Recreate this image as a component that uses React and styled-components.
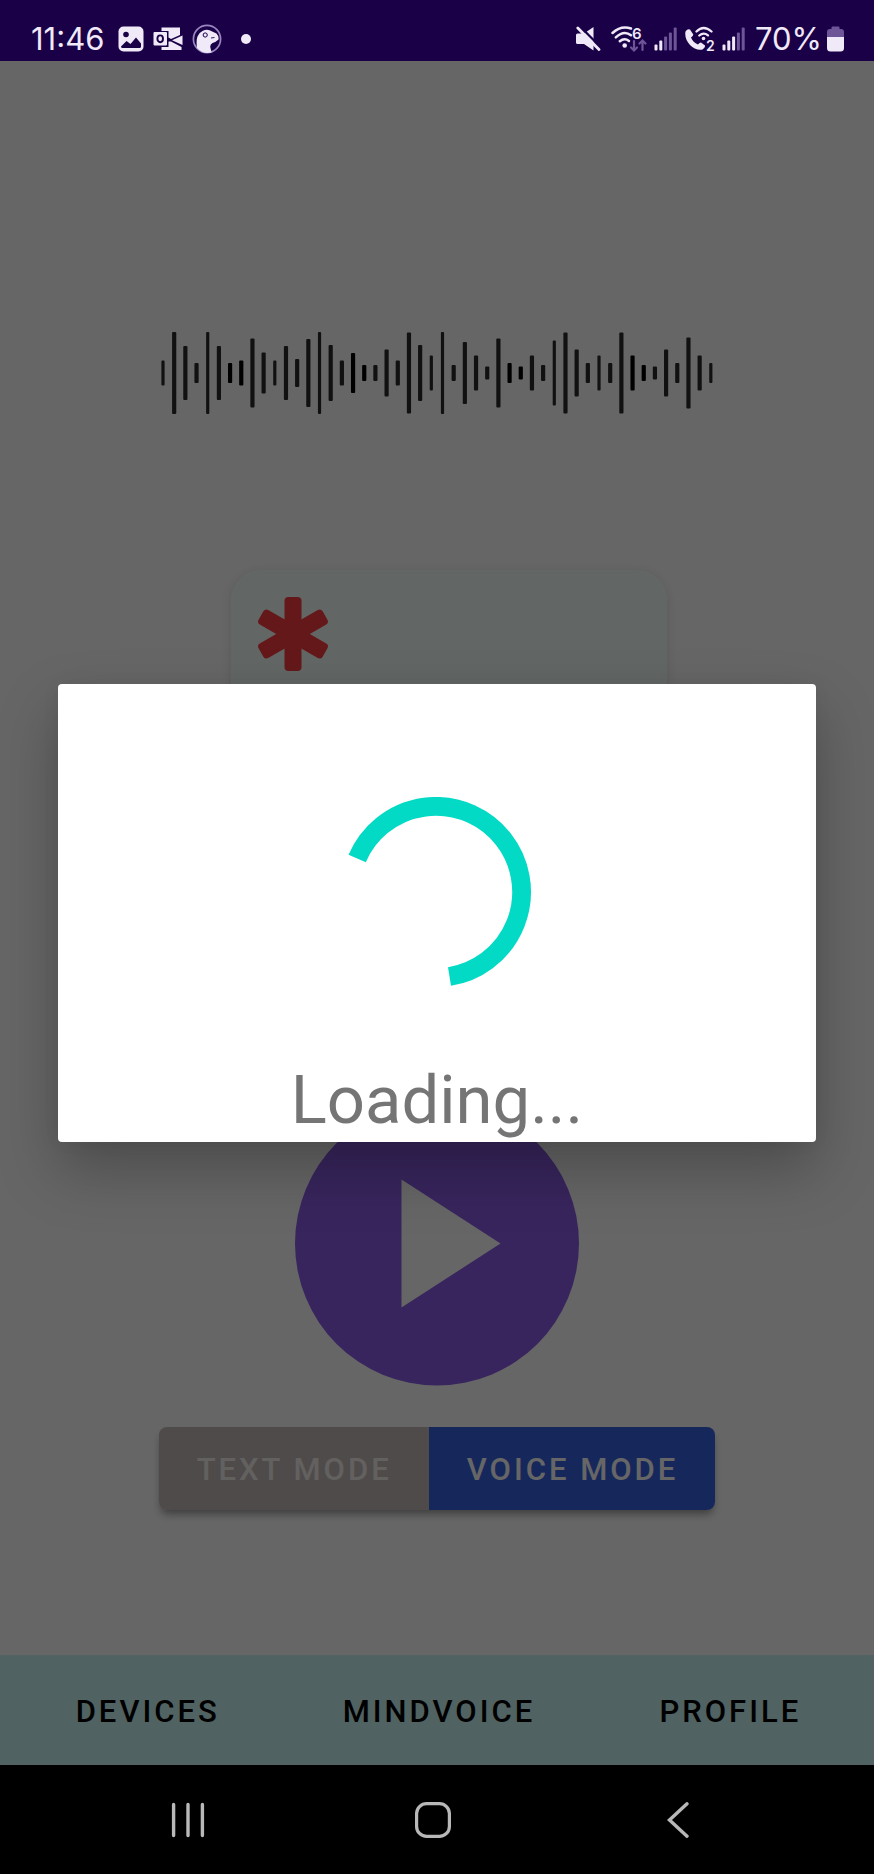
import React from "react";
import styled, { createGlobalStyle } from "styled-components";

const ICON = "#f0e9f8";
const ICON_DIM = "#6d5597";
const STATUS_BG = "#1a0047";

const GlobalStyle = createGlobalStyle`
  * { box-sizing: border-box; }
  body { margin: 0; background: #000; font-family: Roboto, "Liberation Sans", sans-serif; }
  button { font: inherit; border: 0; padding: 0; margin: 0; background: none; cursor: pointer; }
  svg { display: block; flex: none; }
`;

const Phone = styled.div`
  min-height: 100vh;
  display: flex;
  flex-direction: column;
`;

const StatusBar = styled.header`
  display: flex;
  justify-content: space-between;
  align-items: center;
  height: 61px;
  padding: 17px 30px 0 31px;
  background: ${STATUS_BG};
  color: ${ICON};
`;

const StatusGroup = styled.div`
  display: flex;
  align-items: center;
  gap: ${(p) => p.$gap}px;
`;

const StatusText = styled.span`
  font-family: Inter, Roboto, sans-serif;
  font-size: 31px;
  line-height: 36px;
  white-space: nowrap;
`;

const AppArea = styled.div`
  position: relative;
  flex: 1;
  display: flex;
  flex-direction: column;
  background: #fff;
`;

const Screen = styled.main`
  flex: 1;
  display: flex;
  flex-direction: column;
  align-items: center;
  padding: 270px 24px 144px;
`;

const WaveBox = styled.div`
  margin-bottom: 155px;
`;

const MessageCard = styled.section`
  width: 436px;
  max-width: 100%;
  height: 476px;
  margin: 0 0 55px 24px;
  padding: 26px 24px;
  border-radius: 30px;
  background: #f6fffc;
  box-shadow: 0 2px 12px rgba(0, 0, 0, 0.12);
`;

const PlayButton = styled.button`
  width: 284px;
  height: 285px;
  margin-bottom: 41px;
  border-radius: 50%;
`;

const ModeSwitch = styled.div`
  display: flex;
  border-radius: 8px;
  box-shadow: 0 6px 8px -2px rgba(0, 0, 0, 0.4);
`;

const ModeButton = styled.button`
  height: 83px;
  padding: 2px 37px 0 38px;
  font-size: 31px;
  font-weight: 500;
  letter-spacing: 3px;
  white-space: nowrap;
  color: ${(p) => (p.$active ? "#ffffff" : "#f4f2ef")};
  background: ${(p) => (p.$active ? "#3962e6" : "#c6bbb9")};
  border-radius: ${(p) => (p.$active ? "0 8px 8px 0" : "8px 0 0 8px")};
`;

const TabBar = styled.nav`
  display: grid;
  grid-template-columns: repeat(3, 1fr);
  height: 110px;
  background: #c8f5f3;
`;

const Tab = styled.button`
  padding: 2px 0 0 4px;
  font-size: 31px;
  font-weight: 500;
  letter-spacing: 3px;
  color: #000;
`;

const Scrim = styled.div`
  position: absolute;
  inset: 0;
  display: flex;
  align-items: center;
  padding: 0 58px;
  background: rgba(0, 0, 0, 0.6);
`;

const Dialog = styled.div`
  flex: 1;
  display: flex;
  flex-direction: column;
  align-items: center;
  gap: 73px;
  padding: 113px 24px 2px;
  border-radius: 4px;
  background: #fff;
  box-shadow: 0 28px 60px rgba(0, 0, 0, 0.26), 0 0 20px rgba(0, 0, 0, 0.04);
`;

const LoadingText = styled.p`
  margin: 0;
  font-size: 67px;
  line-height: 80px;
  color: #757575;
`;

const SystemNav = styled.nav`
  display: grid;
  grid-template-columns: repeat(3, 1fr);
  height: 109px;
  padding: 0 73px 0 65px;
  background: #000;
`;

const SystemButton = styled.button`
  display: flex;
  align-items: center;
  justify-content: center;
`;

const WAVE = [
  25, 82, 54, 20, 82, 54, 20, 25, 69, 41, 25, 54, 28, 68, 82, 56, 25, 40, 16, 16,
  47, 25, 81, 56, 35, 82, 16, 62, 35, 13, 69, 20, 13, 35, 16, 65, 81, 47, 20, 35,
  20, 81, 35, 16, 13, 47, 20, 71, 35, 20,
];
const THIN = [0, 4, 10, 14, 24, 25, 35, 39, 49];
const BOLD = [6, 7, 17, 18, 31, 32, 42, 43];

function Waveform() {
  return (
    <svg width="554" height="84" viewBox="0 0 554 84" role="img" aria-label="Sound wave">
      {WAVE.map((h, i) => {
        const w = THIN.includes(i) ? 3.2 : 4.2;
        return (
          <rect
            key={i}
            x={3 + i * 11.18 - w / 2}
            y={42 - h / 2}
            width={w}
            height={h}
            rx="1"
            fill={BOLD.includes(i) ? "#000" : "#2c2c2c"}
          />
        );
      })}
    </svg>
  );
}

function Asterisk() {
  return (
    <svg width="76" height="76" viewBox="-38 -38 76 76" fill="#f93d40" role="img" aria-label="Required">
      {[0, 60, 120].map((a) => (
        <rect key={a} x="-8.5" y="-37" width="17" height="74" rx="4" transform={`rotate(${a})`} />
      ))}
    </svg>
  );
}

function GalleryIcon() {
  return (
    <svg width="26" height="26" viewBox="0 0 26 26">
      <rect x="0.5" y="0.5" width="25" height="25" rx="5" fill={ICON} />
      <circle cx="8" cy="8.5" r="2.8" fill={STATUS_BG} />
      <path d="M3 20.5 8.500 15 12.500 18 18 11.500 23 17.500V20.500Q23 22 21.500 22H4.500Q3 22 3 20.500Z" fill={STATUS_BG} />
    </svg>
  );
}

function MailIcon() {
  return (
    <svg width="30" height="26" viewBox="0 0 30 26">
      <path d="M8.5 1.500H27V9L18 13 15.500 11.500V5H8.500Z" fill={ICON} />
      <path d="M29.5 9.500V19L19 14.200Z" fill={ICON} />
      <path d="M8.5 21H15.500V15.500H18L28.500 21V24H8.500Z" fill={ICON} />
      <rect x="0.5" y="6" width="13.5" height="13.5" rx="1" fill={ICON} />
      <ellipse cx="7.2" cy="12.8" rx="2.8" ry="3.4" fill="none" stroke={STATUS_BG} strokeWidth="1.9" />
    </svg>
  );
}

function DuckIcon() {
  return (
    <svg width="30" height="30" viewBox="0 0 30 30">
      <circle cx="15" cy="15" r="13.6" fill="none" stroke="#9a86bf" strokeWidth="1.7" />
      <path d="M5 24Q4 16 5.500 12.500 7 8.500 10.500 7 14 5.200 17.500 6.200L24.500 9.500Q27 12 26.500 15.500 24 18 20.500 19 17.500 20.500 18.500 24L19.500 28.500Q11 30.500 5 24Z" fill={ICON} />
      <circle cx="13.2" cy="11" r="2.1" fill={ICON} stroke={STATUS_BG} strokeWidth="1" />
      <path d="M19 14 22.500 13.500" stroke={STATUS_BG} strokeWidth="0.9" />
    </svg>
  );
}

function DotIcon() {
  return (
    <svg width="30" height="10" viewBox="0 0 30 10">
      <circle cx="15" cy="5" r="5" fill={ICON} />
    </svg>
  );
}

function MuteIcon() {
  return (
    <svg width="28" height="26" viewBox="0 0 28 26">
      <path d="M1.5 7.500H8L17.500 1V24.500L8 18H1.500Q0 18 0 16.500V9Q0 7.500 1.500 7.500Z" fill={ICON} />
      <path d="M3.5 0 26 22.500" stroke={STATUS_BG} strokeWidth="2.4" />
      <path d="M1.8 2 23 23.500" stroke={ICON} strokeWidth="2.8" strokeLinecap="round" />
    </svg>
  );
}

function WifiIcon() {
  return (
    <svg width="36" height="28" viewBox="0 0 36 28" fill="none" strokeLinecap="round">
      <g stroke={ICON} strokeWidth="2.5">
        <path d="M1.5 8Q10 0 20 3.500" />
        <path d="M4.8 12.300Q13 4.800 20 10.300" />
        <path d="M8.8 16.300Q13.500 12.300 18 16" />
      </g>
      <circle cx="13.7" cy="20.5" r="2.3" fill={ICON} />
      <text x="21" y="13.5" fontFamily="Inter, sans-serif" fontSize="15" fontWeight="600" fill={ICON}>6</text>
      <g stroke={ICON_DIM} strokeWidth="2.2">
        <path d="M23 16V25M20 22.500 23 25.500 26 22.500" />
        <path d="M31.5 25V16M28.500 18.500 31.500 15.500 34.500 18.500" />
      </g>
    </svg>
  );
}

function SignalIcon({ level }) {
  return (
    <svg width="24" height="26" viewBox="0 0 24 26">
      {[6, 10, 14, 18, 23].map((h, i) => (
        <rect key={h} x={0.5 + i * 4.8} y={24.5 - h} width="3" height={h} rx="1" fill={i < level ? ICON : ICON_DIM} />
      ))}
    </svg>
  );
}

function CallIcon() {
  return (
    <svg width="30" height="26" viewBox="0 0 30 26" fill="none" strokeLinecap="round">
      <path d="M0.5 5.500Q2.500 2.500 5 3.500L8.300 8.500Q8.300 10 6 11.500 8 16.500 13 18.500 14.500 16.500 16 16.500L20 19.500Q20.500 21.500 17.500 23.500C9 25.500-1.500 15.500 0.500 5.500Z" fill={ICON} />
      <path d="M11.5 5.500Q18.500-1.500 26.500 5.500M14.300 9.500Q18.500 5.800 23 9.300" stroke={ICON} strokeWidth="2.3" />
      <circle cx="18.5" cy="12.5" r="1.8" fill={ICON} />
      <text x="21" y="24.5" fontFamily="Inter, sans-serif" fontSize="14" fontWeight="600" fill={ICON}>2</text>
    </svg>
  );
}

function BatteryIcon() {
  return (
    <svg width="17" height="26" viewBox="0 0 17 26">
      <path d="M0 11V6Q0 3 3 3H4.500V1.500Q4.500 0.500 5.500 0.500H11.500Q12.500 0.500 12.500 1.500V3H14Q17 3 17 6V11Z" fill={ICON_DIM} />
      <path d="M0 11H17V22Q17 25.500 13.500 25.500H3.500Q0 25.500 0 22Z" fill={ICON} />
    </svg>
  );
}

export default function App() {
  return (
    <>
      <GlobalStyle />
      <Phone>
        <StatusBar>
          <StatusGroup $gap={14}>
            <StatusText>11:46</StatusText>
            <StatusGroup $gap={9}>
              <GalleryIcon />
              <MailIcon />
              <DuckIcon />
              <DotIcon />
            </StatusGroup>
          </StatusGroup>
          <StatusGroup $gap={9}>
            <StatusGroup $gap={7}>
              <MuteIcon />
              <WifiIcon />
              <SignalIcon level={2} />
              <CallIcon />
              <SignalIcon level={3} />
            </StatusGroup>
            <StatusGroup $gap={5}>
              <StatusText>70%</StatusText>
              <BatteryIcon />
            </StatusGroup>
          </StatusGroup>
        </StatusBar>

        <AppArea>
          <Screen>
            <WaveBox>
              <Waveform />
            </WaveBox>
            <MessageCard>
              <Asterisk />
            </MessageCard>
            <PlayButton aria-label="Play">
              <svg width="284" height="285" viewBox="0 0 284 285">
                <circle cx="142" cy="142.5" r="142" fill="#8d5de8" />
                <path d="M106.5 78.500V206.500L205.500 142.500Z" fill="#fff" />
              </svg>
            </PlayButton>
            <ModeSwitch role="group" aria-label="Input mode">
              <ModeButton aria-pressed="false">TEXT MODE</ModeButton>
              <ModeButton $active aria-pressed="true">VOICE MODE</ModeButton>
            </ModeSwitch>
          </Screen>
          <TabBar>
            <Tab>DEVICES</Tab>
            <Tab>MINDVOICE</Tab>
            <Tab>PROFILE</Tab>
          </TabBar>
          <Scrim>
            <Dialog role="dialog" aria-modal="true" aria-labelledby="loading-text">
              <svg width="190" height="190" viewBox="-94 -95 190 190" fill="none">
                <path d="M-78.8-33.500A85.600 85.600 0 1 1 13.500 84.500" stroke="#03dac5" strokeWidth="18.8" />
              </svg>
              <LoadingText id="loading-text">Loading...</LoadingText>
            </Dialog>
          </Scrim>
        </AppArea>

        <SystemNav aria-label="System">
          <SystemButton aria-label="Recent apps">
            <svg width="36" height="36" viewBox="0 0 36 36" stroke="#b8b8b8" strokeWidth="3.4" strokeLinecap="round">
              <path d="M3.6 2.500V33.500M18 2.500V33.500M32.400 2.500V33.500" />
            </svg>
          </SystemButton>
          <SystemButton aria-label="Home">
            <svg width="36" height="36" viewBox="0 0 36 36" fill="none" stroke="#b8b8b8" strokeWidth="3.2">
              <rect x="1.6" y="1.6" width="32.8" height="32.8" rx="10" />
            </svg>
          </SystemButton>
          <SystemButton aria-label="Back">
            <svg width="36" height="36" viewBox="0 0 36 36" fill="none" stroke="#b8b8b8" strokeWidth="3.4" strokeLinecap="round">
              <path d="M27 1.800 9.500 18 27 34.200" />
            </svg>
          </SystemButton>
        </SystemNav>
      </Phone>
    </>
  );
}
